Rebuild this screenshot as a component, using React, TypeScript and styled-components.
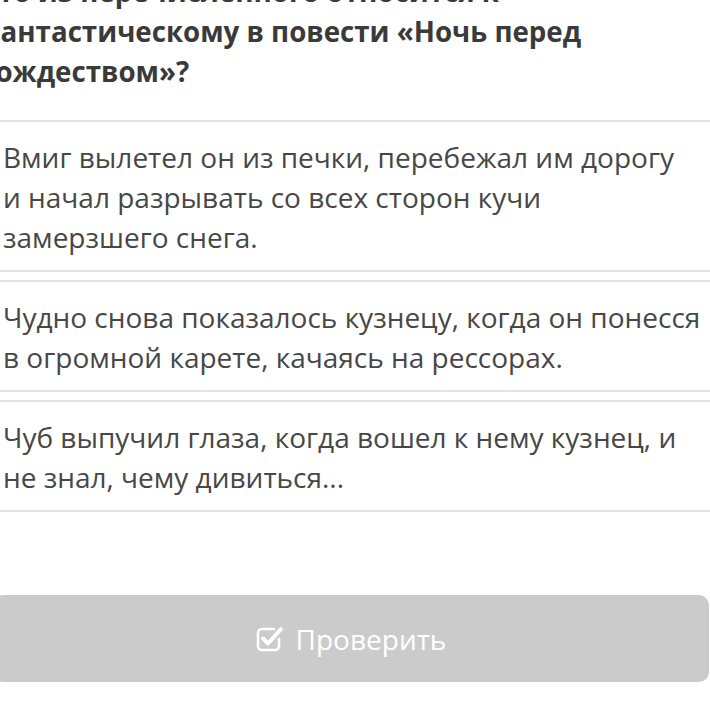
import React from "react";
import styled, { createGlobalStyle } from "styled-components";

const Global = createGlobalStyle`
  html, body { margin: 0; padding: 0; background: #ffffff; overflow: hidden; }
  body { font-family: "Open Sans", "Noto Sans", sans-serif; }
`;

const Page = styled.div`
  width: 727px;
  margin: -29px 0 0 -13px;
  display: flex;
  flex-direction: column;
`;

const Question = styled.h2`
  margin: 0 0 29px -9px;
  font-size: 27.7px;
  line-height: 40px;
  font-weight: 700;
  color: #3a3a3a;
`;

const Line = styled.span`
  display: block;
  white-space: nowrap;
`;

const Answers = styled.div`
  display: flex;
  flex-direction: column;
  gap: 8px;
`;

const AnswerCard = styled.div`
  border: 2px solid #e2e2e2;
  padding: 15px 14px 13px 14px;
  font-size: 28px;
  line-height: 40px;
  color: #474747;
  background: #fff;
`;

const CheckButton = styled.button`
  margin: 83px 0 0 6px;
  height: 87px;
  width: 716px;
  border: none;
  border-radius: 10px;
  background: #cbcbcb;
  color: #ffffff;
  font-family: "Open Sans", sans-serif;
  font-size: 28px;
  display: flex;
  align-items: center;
  justify-content: center;
  gap: 12px;
  padding: 0;
`;

const CheckIcon = () => (
  <svg width="28" height="26" viewBox="0 0 28 26" fill="none">
    <path
      d="M18 3H6a4 4 0 0 0-4 4v13a4 4 0 0 0 4 4h13a4 4 0 0 0 4-4v-7"
      stroke="#fff"
      strokeWidth="2.6"
      strokeLinecap="round"
    />
    <path
      d="M7 12.5l5 5L25 3"
      stroke="#fff"
      strokeWidth="4"
      strokeLinecap="round"
      strokeLinejoin="round"
    />
  </svg>
);

const questionLines = [
  "Что из перечисленного относится к",
  "фантастическому в повести «Ночь перед",
  "Рождеством»?",
];

const answers = [
  [
    "Вмиг вылетел он из печки, перебежал им дорогу",
    "и начал разрывать со всех сторон кучи",
    "замерзшего снега.",
  ],
  [
    "Чудно снова показалось кузнецу, когда он понесся",
    "в огромной карете, качаясь на рессорах.",
  ],
  [
    "Чуб выпучил глаза, когда вошел к нему кузнец, и",
    "не знал, чему дивиться...",
  ],
];

export default function App() {
  return (
    <>
      <Global />
      <Page>
        <Question>
          {questionLines.map((l) => (
            <Line key={l}>{l}</Line>
          ))}
        </Question>
        <Answers>
          {answers.map((lines) => (
            <AnswerCard key={lines[0]}>
              {lines.map((l) => (
                <Line key={l}>{l}</Line>
              ))}
            </AnswerCard>
          ))}
        </Answers>
        <CheckButton>
          <CheckIcon />
          Проверить
        </CheckButton>
      </Page>
    </>
  );
}
